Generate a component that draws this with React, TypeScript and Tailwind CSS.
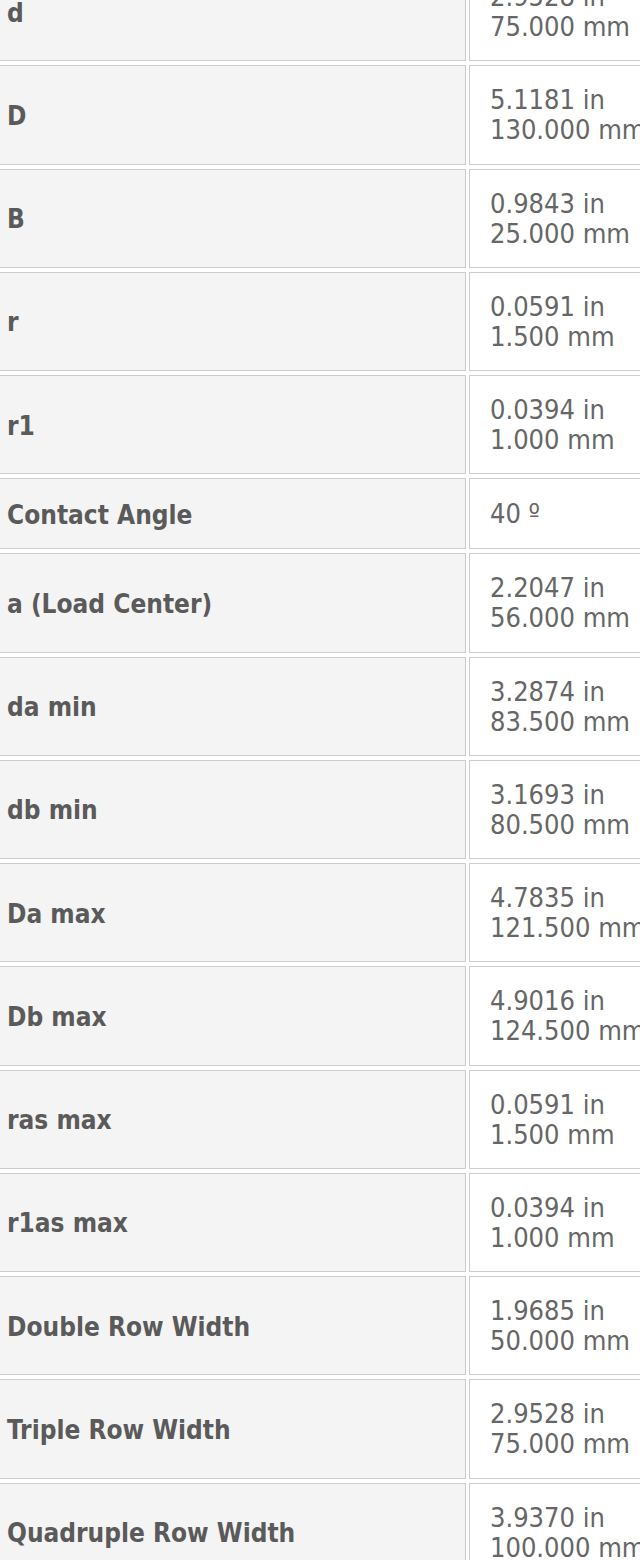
const rows = [
  { label: "d", inch: "2.9528 in", mm: "75.000 mm" },
  { label: "D", inch: "5.1181 in", mm: "130.000 mm" },
  { label: "B", inch: "0.9843 in", mm: "25.000 mm" },
  { label: "r", inch: "0.0591 in", mm: "1.500 mm" },
  { label: "r1", inch: "0.0394 in", mm: "1.000 mm" },
  { label: "Contact Angle", single: "40 º" },
  { label: "a (Load Center)", inch: "2.2047 in", mm: "56.000 mm" },
  { label: "da min", inch: "3.2874 in", mm: "83.500 mm" },
  { label: "db min", inch: "3.1693 in", mm: "80.500 mm" },
  { label: "Da max", inch: "4.7835 in", mm: "121.500 mm" },
  { label: "Db max", inch: "4.9016 in", mm: "124.500 mm" },
  { label: "ras max", inch: "0.0591 in", mm: "1.500 mm" },
  { label: "r1as max", inch: "0.0394 in", mm: "1.000 mm" },
  { label: "Double Row Width", inch: "1.9685 in", mm: "50.000 mm" },
  { label: "Triple Row Width", inch: "2.9528 in", mm: "75.000 mm" },
  { label: "Quadruple Row Width", inch: "3.9370 in", mm: "100.000 mm" },
];

export default function App() {
  return (
    <main
      className="h-[1560px] w-[640px] overflow-hidden bg-white"
      style={{ fontFamily: '"DejaVu Sans Condensed", "DejaVu Sans", sans-serif' }}
    >
      <div className="-ml-[4px] -mt-[38px] flex flex-col gap-[4px]">
        {rows.map((row) => (
          <div key={row.label} className="flex gap-[3px]">
            {/* spec name */}
            <div className="flex w-[470px] shrink-0 items-center border border-[#cdcdcd] bg-[#f4f4f4] pl-[10px] pt-[3px] text-[26px] font-bold text-[#5a5a5a]">
              {row.label}
            </div>
            {/* value */}
            {row.single ? (
              <div className="w-[260px] shrink-0 border border-[#cdcdcd] bg-white pb-[19px] pl-[20px] pt-[20px] text-[27px] leading-[30px] text-[#666666]">
                {row.single}
              </div>
            ) : (
              <div className="w-[260px] shrink-0 border border-[#cdcdcd] bg-white pb-[18.25px] pl-[20px] pt-[19px] text-[27px] leading-[30px] text-[#666666]">
                <div>{row.inch}</div>
                <div>{row.mm}</div>
              </div>
            )}
          </div>
        ))}
      </div>
    </main>
  );
}
